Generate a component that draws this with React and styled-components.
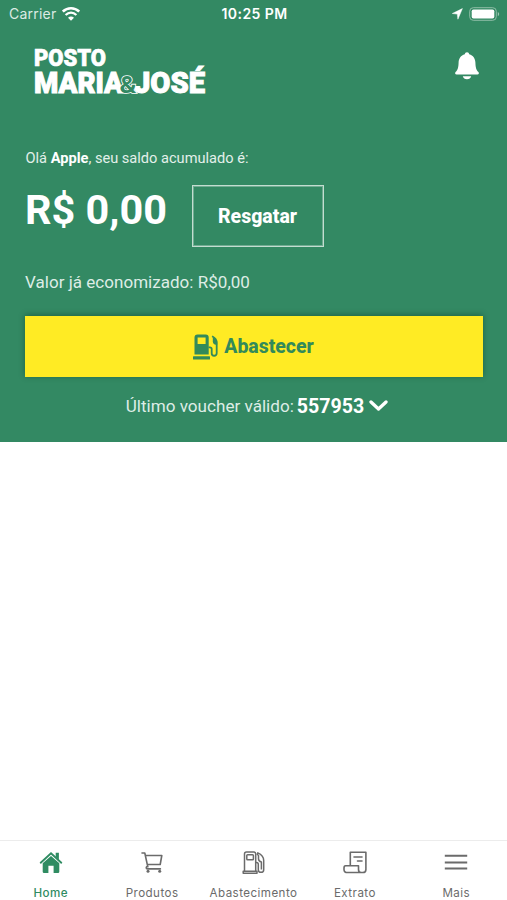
import React, { useState } from "react";
import styled, { createGlobalStyle } from "styled-components";

const GlobalStyle = createGlobalStyle`
  * {
    box-sizing: border-box;
  }
  body {
    margin: 0;
    background: #fff;
    font-family: Roboto, sans-serif;
  }
`;

const Screen = styled.div`
  width: 100%;
  height: 900px;
  display: flex;
  flex-direction: column;
  overflow: hidden;
`;

const Panel = styled.header`
  height: 442px;
  background: #338963;
  color: #fff;
`;

const StatusBar = styled.div`
  height: 28px;
  padding: 0 7px 0 9px;
  display: grid;
  grid-template-columns: 1fr auto 1fr;
  align-items: center;
  font-family: Inter, sans-serif;
  font-size: 14px;
  line-height: 28px;
`;

const StatusGroup = styled.div`
  display: flex;
  align-items: center;
  gap: ${({ gap }) => gap};
  justify-content: ${({ end }) => (end ? "flex-end" : "flex-start")};
`;

const Carrier = styled.span`
  color: #dcebe4;
  letter-spacing: 0.22px;
`;

const Clock = styled.span`
  font-weight: 600;
  font-size: 14px;
  letter-spacing: 0.42px;
`;

const TopBar = styled.div`
  height: 118px;
  padding: 14px 27px 0 28px;
  display: flex;
  justify-content: space-between;
`;

const BellButton = styled.div`
  margin-top: 9px;
  height: 30px;
  display: flex;
`;

const Content = styled.div`
  padding: 0 24px 0 25px;
`;

const Greeting = styled.p`
  margin: 0 0 0 0.5px;
  line-height: 24px;
  font-size: 14.6px;
  color: #e3f0ea;
  b {
    color: #fff;
  }
`;

const BalanceRow = styled.div`
  display: flex;
  margin-top: 15px;
`;

const Balance = styled.div`
  width: 167px;
  font-size: 41.4px;
  font-weight: 700;
  line-height: 50px;
  white-space: nowrap;
`;

const RedeemButton = styled.button`
  width: 132px;
  height: 62px;
  padding: 1px 1px 0 0;
  border: 1px solid #c3ddd0;
  background: transparent;
  color: #fff;
  font: 800 19.5px Roboto, sans-serif;
  box-shadow: inset 0 0 0 1px rgba(255, 255, 255, 0.3);
`;

const Saved = styled.p`
  margin: 22px 0 0;
  font-size: 17px;
  letter-spacing: 0.03px;
  line-height: 26px;
  color: #deede6;
`;

const FuelButton = styled.button`
  width: 458px;
  height: 61px;
  margin-top: 21px;
  padding: 0 1px 0 0;
  display: flex;
  align-items: center;
  justify-content: center;
  gap: 6px;
  border: none;
  background: #ffeb24;
  color: #338a5a;
  font: 800 19.4px Roboto, sans-serif;
  box-shadow: 0 -1px 6px rgba(0, 40, 20, 0.4);
`;

const Voucher = styled.div`
  margin-top: 16px;
  height: 26px;
  padding-left: 6px;
  display: flex;
  align-items: center;
  justify-content: center;
  font-size: 17.1px;
  color: #deede6;
`;

const VoucherCode = styled.b`
  margin: 1px 5px 0 3px;
  font-size: 19.6px;
  color: #fff;
`;

const Body = styled.main`
  flex: 1;
  background: #fff;
`;

const TabBar = styled.nav`
  height: 60px;
  display: grid;
  grid-template-columns: repeat(5, 1fr);
  border-top: 1px solid #ececec;
`;

const Tab = styled.div`
  display: flex;
  flex-direction: column;
  align-items: center;
  padding-top: 10px;
  cursor: pointer;
  color: ${({ active }) => (active ? "#2f8c62" : "#6b6b6b")};
`;

const TabLabel = styled.span`
  margin-top: 9.5px;
  font-family: Inter, sans-serif;
  font-size: 11.6px;
  line-height: 16px;
  letter-spacing: 0.44px;
  font-weight: ${({ active }) => (active ? 500 : 400)};
`;

const WifiIcon = () => (
  <svg width="18" height="14" viewBox="0 0 18 14" fill="none" stroke="#fff">
    <path d="M.8 4.600C5.500 .2 12.500 .2 17.200 4.600" strokeWidth="2.600" />
    <path d="M3.600 8C6.800 5 11.200 5 14.400 8" strokeWidth="2.300" />
    <path d="M9 13.800 6 10.700Q9 8.200 12 10.700Z" fill="#fff" stroke="none" />
  </svg>
);

const LocationIcon = () => (
  <svg width="11" height="12" viewBox="0 0 11 12" fill="#fff">
    <path d="M10.400 .6 5.900 11.200 5.300 6.100.3 5.500Z" stroke="#fff" strokeWidth=".5" strokeLinejoin="round" />
  </svg>
);

const BatteryIcon = () => (
  <svg width="31" height="14" viewBox="0 0 31 14">
    <rect x=".7" y=".7" width="26.600" height="12.600" rx="3.600" fill="none" stroke="#8fbda7" strokeWidth="1" />
    <rect x="2.700" y="2.500" width="22.600" height="9" rx="1.800" fill="#fff" />
    <path d="M28.800 4.700q2.800 2.300 0 4.600z" fill="#9bc5b1" />
  </svg>
);

const Logo = () => (
  <svg
    width="184"
    height="58"
    viewBox="0 0 184 58"
    fill="#fff"
    stroke="#fff"
    fontFamily="Roboto, sans-serif"
    fontWeight="900"
  >
    <text x="6" y="23.500" fontSize="23" strokeWidth=".7" textLength="72" lengthAdjust="spacingAndGlyphs">
      POSTO
    </text>
    <text x="6" y="51" fontSize="30" strokeWidth="1" textLength="89" lengthAdjust="spacingAndGlyphs">
      MARIA
    </text>
    <text x="106" y="51" fontSize="30" strokeWidth="1" textLength="71" lengthAdjust="spacingAndGlyphs">
      JOSÉ
    </text>
    <text
      x="91.500"
      y="51"
      fontSize="24"
      fontWeight="700"
      fill="#338963"
      strokeWidth="1.600"
      textLength="17"
      lengthAdjust="spacingAndGlyphs"
      paintOrder="stroke"
    >
      &amp;
    </text>
  </svg>
);

const BellIcon = () => (
  <svg width="26" height="30" viewBox="0 0 26 30" fill="#fff">
    <path d="M13 1.200c1.300 0 2 .8 2.200 2 4 1 6 4.200 6.200 8.300 .2 5 .6 7.200 3 9.600 .9 1 .5 2.500-1 2.500H2.600c-1.500 0-1.900-1.500-1-2.500 2.400-2.400 2.800-4.600 3-9.600.2-4.100 2.200-7.300 6.200-8.300.2-1.200.9-2 2.200-2z" />
    <path d="M8.800 25.200h8.400c-.5 1.900-2 3-4.200 3s-3.700-1.100-4.200-3z" />
  </svg>
);

const PumpSolidIcon = () => (
  <svg width="25" height="26" viewBox="0 0 25 26" fill="currentColor">
    <path
      fillRule="evenodd"
      d="M4.500 .5h8.200a3 3 0 0 1 3 3v17H1.500v-17a3 3 0 0 1 3-3zM4.600 3.500v6.400h8V3.500z"
    />
    <rect x="0" y="22.200" width="17" height="3.300" rx=".6" />
    <path
      d="M15.500 13.300h1.300q1.900 0 1.900 1.800v4.100c0 3.400 4.800 3.400 5 0V8.500q0-4-4.600-6.300"
      fill="none"
      stroke="currentColor"
      strokeWidth="1.800"
    />
    <path d="M19.800 3v4.200q.1 3.300 3.200 3.600h1.200V7z" />
  </svg>
);

const ChevronIcon = () => (
  <svg width="19" height="14" viewBox="0 0 19 14" fill="none" stroke="#fff" strokeWidth="3.300">
    <path d="M2 3 9.500 10 17 3" strokeLinecap="round" strokeLinejoin="round" />
  </svg>
);

const HomeIcon = () => (
  <svg width="24" height="24" viewBox="0 0 24 24" fill="currentColor">
    <path d="M1.700 11.700 12 2.400l10.300 9.300" fill="none" stroke="currentColor" strokeWidth="1.900" strokeLinecap="round" />
    <path d="M16.700 1.800h3.200v7l-3.200-2.900z" />
    <path d="M12 5 20.300 12.300v8.400q0 1.300-1.300 1.300h-4.400v-7.200H9.400V22H5Q3.700 22 3.700 20.700v-8.400z" />
  </svg>
);

const CartIcon = () => (
  <svg width="24" height="24" viewBox="0 0 24 24" fill="none" stroke="currentColor" strokeWidth="1.600">
    <path
      d="M2 2h2.800l3 13.800M5.400 4.500h16.400l-1.600 9H7.500M7.800 15.300q-1.600.3-1.600 1.400t1.400 1.200H20.400"
      strokeLinejoin="round"
      strokeLinecap="round"
    />
    <circle cx="8" cy="20.300" r="1.500" fill="currentColor" stroke="none" />
    <circle cx="19.700" cy="20.300" r="1.500" fill="currentColor" stroke="none" />
  </svg>
);

const PumpIcon = () => (
  <svg width="24" height="24" viewBox="0 0 24 24" fill="none" stroke="currentColor" strokeWidth="1.500" strokeLinejoin="round">
    <path d="M3.500 20.300V3Q3.500 1 5.500 1h7.200q2 0 2 2v17.300M2.200 20.300h13.800v2H2.200z" />
    <rect x="5.800" y="3.800" width="6.600" height="5" rx=".8" />
    <path d="M14.700 11.600h.8q1.800 0 1.800 1.900v5.200c0 3.500 5.400 3.500 5.400 0V9.500q0-5-5.900-7.600l-.6 1.400 1.300 1.200v3.200q0 2.600 2.900 3.200v7.500" />
  </svg>
);

const ReceiptIcon = () => (
  <svg width="24" height="24" viewBox="0 0 24 24" fill="none" stroke="currentColor" strokeWidth="1.600" strokeLinejoin="round">
    <path d="M7.300 14.800V1.200h15.600v17.200q0 3.100-3.100 3.100H4.700Q1 21.500 1 18.400v-1.200q0-2.400 1.500-2.400h13v3.600q0 3.100 2.700 3.100" />
    <path d="M11 6h8M14.500 10h4.500" strokeLinecap="round" />
  </svg>
);

const MenuIcon = () => (
  <svg width="24" height="24" viewBox="0 0 24 24" stroke="currentColor" strokeWidth="1.900">
    <path d="M.8 4.800h22.400M.8 11.500h22.400M.8 17.500h22.400" />
  </svg>
);

const tabs = [
  { label: "Home", Icon: HomeIcon },
  { label: "Produtos", Icon: CartIcon },
  { label: "Abastecimento", Icon: PumpIcon },
  { label: "Extrato", Icon: ReceiptIcon },
  { label: "Mais", Icon: MenuIcon },
];

const App = () => {
  const [tab, setTab] = useState(0);
  return (
    <Screen>
      <GlobalStyle />
      <Panel>
        <StatusBar>
          <StatusGroup gap="6px">
            <Carrier>Carrier</Carrier>
            <WifiIcon />
          </StatusGroup>
          <Clock>10:25 PM</Clock>
          <StatusGroup gap="6px" end>
            <LocationIcon />
            <BatteryIcon />
          </StatusGroup>
        </StatusBar>
        <TopBar>
          <Logo />
          <BellButton>
            <BellIcon />
          </BellButton>
        </TopBar>
        <Content>
          <Greeting>
            Olá <b>Apple</b>, seu saldo acumulado é:
          </Greeting>
          <BalanceRow>
            <Balance>R$ 0,00</Balance>
            <RedeemButton>Resgatar</RedeemButton>
          </BalanceRow>
          <Saved>Valor já economizado: R$0,00</Saved>
          <FuelButton>
            <PumpSolidIcon />
            Abastecer
          </FuelButton>
          <Voucher>
            Último voucher válido:
            <VoucherCode>557953</VoucherCode>
            <ChevronIcon />
          </Voucher>
        </Content>
      </Panel>
      <Body />
      <TabBar>
        {tabs.map(({ label, Icon }, index) => (
          <Tab key={label} active={tab === index} onClick={() => setTab(index)}>
            <Icon />
            <TabLabel active={tab === index}>{label}</TabLabel>
          </Tab>
        ))}
      </TabBar>
    </Screen>
  );
};

export default App;
